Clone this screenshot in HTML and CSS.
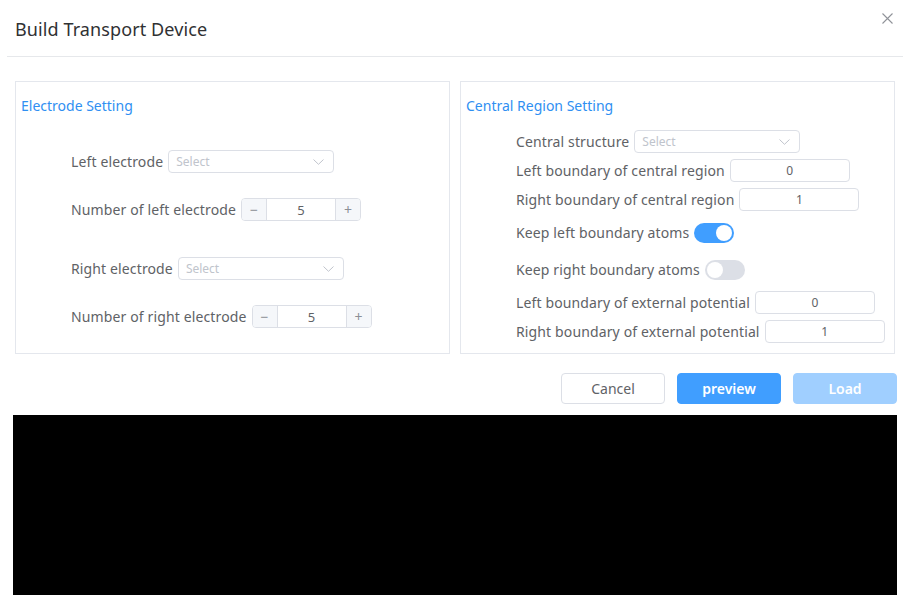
FILE: index.html
```html
<!DOCTYPE html>
<html lang="en">
<head>
<meta charset="utf-8">
<title>Build Transport Device</title>
<link rel="stylesheet" href="styles.css">
</head>
<body>
<div class="dialog">
  <header class="dlg-header">
    <h1 class="dlg-title">Build Transport Device</h1>
    <button class="dlg-close" aria-label="Close">
      <svg width="11" height="11" viewBox="0 0 11 11"><path d="M0.5 0.5 L10.5 10.5 M10.5 0.5 L0.5 10.5" stroke="#909399" stroke-width="1.1" fill="none"/></svg>
    </button>
  </header>

  <main class="dlg-body">
    <div class="panels">
      <section class="panel">
        <h2 class="panel-title">Electrode Setting</h2>
        <div class="form">
          <div class="row mt-35">
            <span class="label">Left electrode</span>
            <div class="select"><span class="placeholder">Select</span><svg class="chev" width="11" height="6" viewBox="0 0 11 6"><path d="M0.5 0.5 L5.5 5.3 L10.5 0.5" stroke="#c0c4cc" stroke-width="1" fill="none"/></svg></div>
          </div>
          <div class="row mt-25">
            <span class="label">Number of left electrode</span>
            <div class="num"><span class="num-btn">&minus;</span><span class="num-val">5</span><span class="num-btn">+</span></div>
          </div>
          <div class="row mt-36">
            <span class="label">Right electrode</span>
            <div class="select"><span class="placeholder">Select</span><svg class="chev" width="11" height="6" viewBox="0 0 11 6"><path d="M0.5 0.5 L5.5 5.3 L10.5 0.5" stroke="#c0c4cc" stroke-width="1" fill="none"/></svg></div>
          </div>
          <div class="row mt-25">
            <span class="label">Number of right electrode</span>
            <div class="num"><span class="num-btn">&minus;</span><span class="num-val">5</span><span class="num-btn">+</span></div>
          </div>
        </div>
      </section>

      <section class="panel">
        <h2 class="panel-title">Central Region Setting</h2>
        <div class="form">
          <div class="row mt-15">
            <span class="label">Central structure</span>
            <div class="select"><span class="placeholder">Select</span><svg class="chev" width="11" height="6" viewBox="0 0 11 6"><path d="M0.5 0.5 L5.5 5.3 L10.5 0.5" stroke="#c0c4cc" stroke-width="1" fill="none"/></svg></div>
          </div>
          <div class="row mt-6">
            <span class="label">Left boundary of central region</span>
            <div class="input">0</div>
          </div>
          <div class="row mt-6">
            <span class="label">Right boundary of central region</span>
            <div class="input">1</div>
          </div>
          <div class="row row-switch mt-12">
            <span class="label">Keep left boundary atoms</span>
            <span class="switch on"><span class="knob"></span></span>
          </div>
          <div class="row row-switch mt-17">
            <span class="label">Keep right boundary atoms</span>
            <span class="switch"><span class="knob"></span></span>
          </div>
          <div class="row mt-11">
            <span class="label">Left boundary of external potential</span>
            <div class="input">0</div>
          </div>
          <div class="row mt-6">
            <span class="label">Right boundary of external potential</span>
            <div class="input">1</div>
          </div>
        </div>
      </section>
    </div>

    <div class="actions">
      <button class="btn btn-default">Cancel</button>
      <button class="btn btn-primary">preview</button>
      <button class="btn btn-primary disabled">Load</button>
    </div>

    <div class="viewer"></div>
  </main>
</div>
</body>
</html>
```

FILE: styles.css
```css
* { box-sizing: border-box; }

body {
  margin: 0;
  background: #ffffff;
  font-family: "Noto Sans", "Liberation Sans", sans-serif;
  color: #606266;
}

.dialog {
  width: 910px;
  height: 609px;
  position: relative;
}

.dlg-header {
  height: 57px;
  margin: 0 7px;
  padding-left: 8px;
  border-bottom: 1px solid #e6e8eb;
  display: flex;
  align-items: center;
}

.dlg-title {
  margin: 0;
  font-size: 18px;
  font-weight: 400;
  color: #303133;
  line-height: 24px;
  letter-spacing: 0.1px;
  position: relative;
  top: 1px;
}

.dlg-close {
  position: absolute;
  top: 13px;
  right: 17px;
  width: 11px;
  height: 11px;
  padding: 0;
  border: 0;
  background: none;
  display: flex;
}

.dlg-body {
  padding: 24px 13px 0 13px;
}

.panels {
  display: flex;
  gap: 10px;
  padding-left: 2px;
}

.panel {
  width: 435px;
  border: 1px solid #e4e7ed;
  padding: 14px 5px 10px 5px;
}

.panel-title {
  margin: 0;
  font-size: 14px;
  font-weight: 400;
  line-height: 20px;
  color: #2f8ff2;
}

.form {
  padding-left: 50px;
}

.row {
  display: flex;
  align-items: center;
  height: 23px;
}

.row-switch { height: 20px; }

.mt-6 { margin-top: 6px; }
.mt-11 { margin-top: 11px; }
.mt-12 { margin-top: 12px; }
.mt-14 { margin-top: 14px; }
.mt-15 { margin-top: 14px; }
.mt-17 { margin-top: 17px; }
.mt-25 { margin-top: 25px; }
.mt-35 { margin-top: 34px; }
.mt-36 { margin-top: 36px; }

.label {
  font-size: 14px;
  color: #606266;
  line-height: 20px;
  letter-spacing: 0.13px;
  margin-right: 5px;
  white-space: nowrap;
}

.select {
  width: 166px;
  height: 23px;
  border: 1px solid #dcdfe6;
  border-radius: 4px;
  display: flex;
  align-items: center;
  justify-content: space-between;
  padding: 0 9px 0 7px;
  background: #fff;
}

.placeholder {
  font-size: 12px;
  color: #c0c4cc;
  line-height: 16px;
}

.chev { display: block; }

.num {
  width: 120px;
  height: 23px;
  border: 1px solid #dcdfe6;
  border-radius: 4px;
  display: flex;
  overflow: hidden;
  background: #fff;
}

.num-btn {
  width: 25px;
  flex: none;
  background: #f5f7fa;
  color: #8c8f96;
  font-size: 14px;
  display: flex;
  align-items: center;
  justify-content: center;
}

.num-btn:first-child { border-right: 1px solid #dcdfe6; }
.num-btn:last-child { border-left: 1px solid #dcdfe6; }

.num-val {
  flex: 1;
  display: flex;
  align-items: center;
  justify-content: center;
  font-size: 13px;
  color: #606266;
}

.input {
  width: 120px;
  height: 23px;
  border: 1px solid #dcdfe6;
  border-radius: 4px;
  display: flex;
  align-items: center;
  justify-content: center;
  font-size: 12px;
  color: #606266;
}

.switch {
  width: 40px;
  height: 20px;
  border-radius: 10px;
  background: #dcdfe6;
  display: flex;
  align-items: center;
  padding: 0 2px;
}

.switch.on {
  background: #409eff;
  justify-content: flex-end;
}

.knob {
  width: 16px;
  height: 16px;
  border-radius: 50%;
  background: #fff;
}

.actions {
  display: flex;
  justify-content: flex-end;
  gap: 12px;
  margin-top: 19px;
}

.btn {
  width: 104px;
  height: 31px;
  border-radius: 4px;
  font-family: "Noto Sans", "Liberation Sans", sans-serif;
  font-size: 14px;
  padding: 0;
  cursor: pointer;
}

.btn-default {
  background: #fff;
  border: 1px solid #dcdfe6;
  color: #606266;
}

.btn-primary {
  background: #409eff;
  border: 1px solid #409eff;
  color: #fff;
  font-weight: 600;
}

.btn-primary.disabled {
  background: #a0cfff;
  border-color: #a0cfff;
}

.viewer {
  margin-top: 11px;
  height: 180px;
  background: #000;
}
```
